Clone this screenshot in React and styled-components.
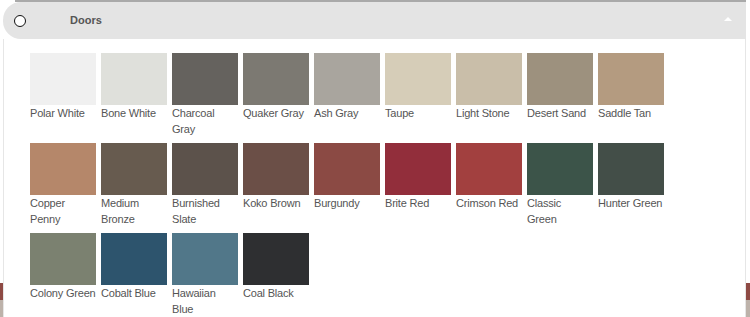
import React from "react";
import styled, { createGlobalStyle } from "styled-components";

const GlobalStyle = createGlobalStyle`
  body {
    margin: 0;
    background: #ffffff;
    font-family: "Liberation Sans", Arial, sans-serif;
  }
`;

const Page = styled.div`
  position: relative;
  width: 750px;
  height: 317px;
  overflow: hidden;
`;

const Backdrop = styled.div`
  margin-top: 283px;
  height: 34px;
  background: linear-gradient(to bottom, #8e4a44 0, #8e4a44 17px, #bdb2aa 17px);
`;

const Dropdown = styled.div`
  position: absolute;
  top: 0;
  left: 3px;
  width: 743px;
  display: flex;
  flex-direction: column;
`;

const TopLine = styled.div`
  height: 2px;
  margin-left: 12px;
  background: #a9a9a9;
`;

const Header = styled.div`
  height: 37px;
  display: flex;
  align-items: center;
  background: #e4e4e4;
  border-radius: 18px 0 0 18px;
  padding: 0 14px 0 11px;
`;

const Radio = styled.span`
  width: 10px;
  height: 10px;
  border: 1.5px solid #111;
  border-radius: 50%;
  background: #fff;
`;

const Title = styled.span`
  margin-left: 44px;
  margin-top: -1px;
  font-size: 11px;
  font-weight: bold;
  color: #555;
  flex: 1;
`;

const Caret = styled.span`
  width: 0;
  height: 0;
  border-left: 4px solid transparent;
  border-right: 4px solid transparent;
  border-bottom: 4px solid #fff;
  margin-top: -4px;
`;

const Body = styled.div`
  background: #fff;
  border-left: 1px solid #e6e6e6;
  border-right: 1px solid #e6e6e6;
  padding: 14px 0 0 26px;
  height: 264px;
`;

const Grid = styled.div`
  display: grid;
  grid-template-columns: repeat(9, 66px);
  column-gap: 5px;
  row-gap: 2px;
`;

const Item = styled.div`
  display: flex;
  flex-direction: column;
  height: 88px;
`;

const Swatch = styled.div`
  height: 52px;
  background: ${(p) => p.$color};
`;

const Label = styled.span`
  font-size: 11px;
  line-height: 16px;
  letter-spacing: -0.2px;
  color: #555;
`;

const colors = [
  ["Polar White", "#f0f0f0"],
  ["Bone White", "#dfe0db"],
  ["Charcoal Gray", "#65625e"],
  ["Quaker Gray", "#7c7972"],
  ["Ash Gray", "#a9a59e"],
  ["Taupe", "#d6cdb8"],
  ["Light Stone", "#c9bea9"],
  ["Desert Sand", "#9d917e"],
  ["Saddle Tan", "#b49b80"],
  ["Copper Penny", "#b5876a"],
  ["Medium Bronze", "#675b4f"],
  ["Burnished Slate", "#5c524b"],
  ["Koko Brown", "#6b4f47"],
  ["Burgundy", "#8b4a44"],
  ["Brite Red", "#922e3b"],
  ["Crimson Red", "#a2403f"],
  ["Classic Green", "#3c5449"],
  ["Hunter Green", "#434e48"],
  ["Colony Green", "#7b8170"],
  ["Cobalt Blue", "#2d546d"],
  ["Hawaiian Blue", "#517789"],
  ["Coal Black", "#2e2f31"],
];

export default function App() {
  return (
    <Page>
      <GlobalStyle />
      <Backdrop />
      <Dropdown>
        <TopLine />
        <Header>
          <Radio />
          <Title>Doors</Title>
          <Caret />
        </Header>
        <Body>
          <Grid>
            {colors.map(([name, color]) => (
              <Item key={name}>
                <Swatch $color={color} />
                <Label>{name}</Label>
              </Item>
            ))}
          </Grid>
        </Body>
      </Dropdown>
    </Page>
  );
}
